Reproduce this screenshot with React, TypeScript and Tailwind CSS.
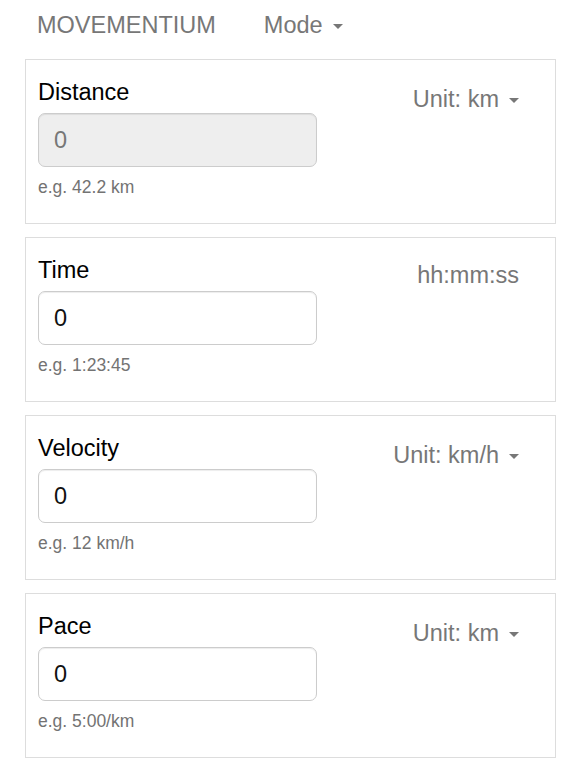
import React from 'react';

interface FieldPanelProps {
  label: string;
  hint: string;
  unit: string;
  dropdown?: boolean;
  disabled?: boolean;
  unitOffset?: string;
}

const Caret = () => (
  <span className="inline-block ml-[10px] w-0 h-0 border-l-[5px] border-r-[5px] border-t-[5px] border-l-transparent border-r-transparent border-t-[#777] align-middle" />
);

const FieldPanel = ({ label, hint, unit, dropdown = true, disabled = false, unitOffset = 'pt-[7px]' }: FieldPanelProps) => {
  return (
    <div className="border border-[#ddd] bg-white h-[165px] pl-[12px] pt-[15px] flex">
      {/* Left column: label, input, help */}
      <div className="w-[279px] shrink-0">
        <label className="block text-[23.5px] leading-[34px] text-black">{label}</label>
        <input
          type="text"
          defaultValue="0"
          disabled={disabled}
          className={`mt-[4px] block w-[279px] h-[54px] rounded-[7px] border border-[#ccc] px-[15px] text-[23.5px] shadow-[inset_0_1px_1px_rgba(0,0,0,0.075)] outline-none ${
            disabled ? 'bg-[#eee] text-[#777]' : 'bg-white text-[#111]'
          }`}
        />
        <p className="mt-[8px] text-[17.5px] leading-[24px] text-[#737373]">{hint}</p>
      </div>

      {/* Right column: unit selector */}
      <div className={`flex-1 text-right pr-[36px] ${unitOffset}`}>
        <span className="text-[23.5px] leading-[34px] text-[#777] whitespace-nowrap">
          {unit}
          {dropdown && <Caret />}
        </span>
      </div>
    </div>
  );
};

const App = () => {
  return (
    <div className="w-[582px] min-h-[776px] bg-white font-['Liberation_Sans',Arial,sans-serif]">
      {/* Navbar */}
      <nav className="h-[59px] flex items-start pt-[8px] pl-[37px]">
        <span className="text-[23.5px] leading-[34px] text-[#777]">MOVEMENTIUM</span>
        <span className="ml-[48px] text-[23.5px] leading-[34px] text-[#777]">
          Mode
          <Caret />
        </span>
      </nav>

      {/* Panels */}
      <div className="pl-[25px] pr-[26px] flex flex-col gap-[13px]">
        <FieldPanel label="Distance" hint="e.g. 42.2 km" unit="Unit: km" disabled />
        <FieldPanel label="Time" hint="e.g. 1:23:45" unit="hh:mm:ss" dropdown={false} unitOffset="pt-[5px]" />
        <FieldPanel label="Velocity" hint="e.g. 12 km/h" unit="Unit: km/h" />
        <FieldPanel label="Pace" hint="e.g. 5:00/km" unit="Unit: km" />
      </div>
    </div>
  );
};

export default App;
